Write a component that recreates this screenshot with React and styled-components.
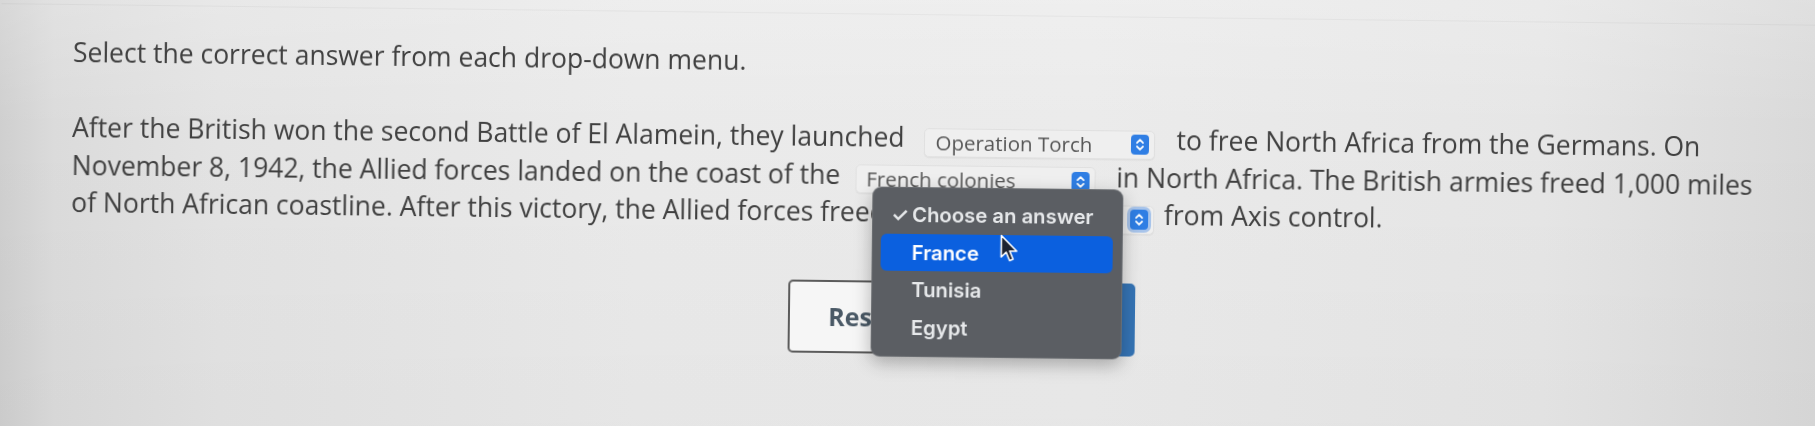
import React from 'react';
import styled, { createGlobalStyle } from 'styled-components';

const GlobalStyle = createGlobalStyle`
  html, body {
    margin: 0;
    padding: 0;
    overflow: hidden;
  }
  body {
    font-family: "Open Sans", "Liberation Sans", sans-serif;
  }
`;

const Page = styled.div`
  position: relative;
  width: 1815px;
  height: 426px;
  overflow: hidden;
  background:
    linear-gradient(180deg, rgba(255, 255, 255, 0.18) 0%, rgba(255, 255, 255, 0) 30%, rgba(0, 0, 0, 0.02) 100%),
    linear-gradient(90deg, #cfcfcf 0%, #dbdbdb 3%, #e3e3e3 12%, #eaeaea 35%, #ebebeb 60%, #e6e6e6 85%, #d9d9d9 100%);
`;

// the whole sheet is tilted a little, as in the photo
const Sheet = styled.div`
  position: relative;
  height: 100%;
  padding: 0 0 0 72px;
  box-sizing: border-box;
  transform: rotate(0.68deg);
  transform-origin: 72px 138px;
  filter: blur(0.4px);
  color: #404040;
`;

const TopEdge = styled.div`
  height: 4px;
  margin-left: -72px;
  border-bottom: 1px solid rgba(0, 0, 0, 0.04);
`;

const Heading = styled.p`
  margin: 29px 0 0;
  font-size: 26.5px;
  line-height: 36px;
`;

const Paragraph = styled.div`
  margin-top: 39px;
  font-size: 26.5px;
`;

const Line = styled.div`
  display: flex;
  align-items: flex-end;
  height: 37.5px;
  white-space: pre;
`;

const Words = styled.span`
  line-height: 37.5px;
`;

const SelectBox = styled.div`
  display: flex;
  align-items: center;
  justify-content: space-between;
  box-sizing: border-box;
  width: ${p => p.$width}px;
  height: 29px;
  margin: 0 ${p => p.$after}px 0 ${p => p.$gap}px;
  padding: 0 5px 0 10px;
  border-radius: 5px;
  background: #efefef;
  border: 1px solid #e0e0e0;
  box-shadow: 0 1px 1px rgba(0, 0, 0, 0.05);
`;

const SelectText = styled.span`
  font-size: 20.5px;
  line-height: 1;
  color: #575757;
`;

const Stepper = styled.span`
  display: flex;
  align-items: center;
  justify-content: center;
  width: 18px;
  height: 20px;
  border-radius: 4px;
  background: #2f7ee4;
  box-shadow: ${p => (p.$focused ? '0 0 0 3px rgba(110, 160, 230, 0.55)' : 'none')};
`;

const ButtonRow = styled.div`
  display: flex;
  gap: 47px;
  margin: 49px 0 0 718px;
`;

const Button = styled.button`
  width: 150px;
  height: 73px;
  border-radius: 5px;
  font-family: "Open Sans", sans-serif;
  font-size: 25px;
  font-weight: 700;
  border: 2.5px solid ${p => (p.$primary ? '#3574b5' : '#5b5b5b')};
  background: ${p => (p.$primary ? '#3574b5' : '#f6f6f6')};
  color: ${p => (p.$primary ? '#ffffff' : '#4a5966')};
`;

const Menu = styled.div`
  position: absolute;
  left: 873px;
  top: 177px;
  width: 251px;
  box-sizing: border-box;
  padding: 8px 9px 10px 8px;
  border-radius: 9px;
  background: #5b5e63;
  border: 1px solid rgba(255, 255, 255, 0.1);
  box-shadow: 0 6px 18px rgba(0, 0, 0, 0.28);
  font-family: Inter, "Liberation Sans", sans-serif;
  font-weight: 600;
  font-size: 20.3px;
  color: #eceef0;
`;

const MenuItem = styled.div`
  display: flex;
  align-items: center;
  height: 37.5px;
  padding-left: 31px;
  position: relative;
  border-radius: 6px;
  background: ${p => (p.$active ? '#0b60df' : 'transparent')};
  color: ${p => (p.$active ? '#ffffff' : '#e7e9eb')};
`;

const Check = styled.span`
  position: absolute;
  left: 10px;
  font-size: 20px;
  font-weight: 600;
`;

const Cursor = styled.svg`
  position: absolute;
  left: 1001px;
  top: 223px;
`;

const StepperIcon = ({ focused }) => (
  <Stepper $focused={focused}>
    <svg width="10" height="14" viewBox="0 0 10 14">
      <path d="M2 5.2 L5 2.2 L8 5.2 M2 8.8 L5 11.8 L8 8.8" fill="none" stroke="#fff" strokeWidth="1.8" strokeLinecap="round" strokeLinejoin="round" />
    </svg>
  </Stepper>
);

const Select = ({ value, width, gap = 17, after = 21, focused }) => (
  <SelectBox $width={width} $gap={gap} $after={after}>
    <SelectText>{value}</SelectText>
    <StepperIcon focused={focused} />
  </SelectBox>
);

const answers = ['France', 'Tunisia', 'Egypt'];

const App = () => {
  return (
    <Page>
      <GlobalStyle />
      <Sheet>
        <TopEdge />
        <Heading>Select the correct answer from each drop-down menu.</Heading>
        <Paragraph>
          <Line>
            <Words>After the British won the second Battle of El Alamein, they launched</Words>
            <Select value="Operation Torch" width={231} gap={20} />
            <Words>to free North Africa from the Germans. On</Words>
          </Line>
          <Line>
            <Words>November 8, 1942, the Allied forces landed on the coast of the</Words>
            <Select value="French colonies" width={240} gap={15} />
            <Words>in North Africa. The British armies freed 1,000 miles</Words>
          </Line>
          <Line>
            <Words>of North African coastline. After this victory, the Allied forces freed</Words>
            <Select value="" width={251} after={10} focused />
            <Words>from Axis control.</Words>
          </Line>
        </Paragraph>
        <ButtonRow>
          <Button>Reset</Button>
          <Button $primary>Next</Button>
        </ButtonRow>

        <Menu>
          <MenuItem>
            <Check>✓</Check>
            Choose an answer
          </MenuItem>
          {answers.map(a => (
            <MenuItem key={a} $active={a === 'France'}>{a}</MenuItem>
          ))}
        </Menu>
        <Cursor width="20" height="30" viewBox="0 0 20 30">
          <path d="M1.5 1.5 L1.5 23 L6.5 18.2 L10 26.5 L13.4 25 L10 17 L17 17 Z" fill="#1c2230" stroke="#ffffff" strokeWidth="1.6" strokeLinejoin="round" />
        </Cursor>
      </Sheet>
    </Page>
  );
};

export default App;
